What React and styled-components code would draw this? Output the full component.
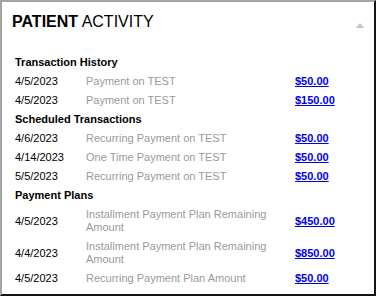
import React from "react";
import styled, { createGlobalStyle } from "styled-components";

const GlobalStyle = createGlobalStyle`
    html, body {
        margin: 0;
        padding: 0;
        background: #ffffff;
    }
    body {
        font-family: "Liberation Sans", Arial, Helvetica, sans-serif;
    }
`

const StyledPanel = styled.div`
    box-sizing: border-box;
    width: 376px;
    height: 296px;
    background: #ffffff;
    border-top: 2px solid #a4a4a4;
    border-left: 2px solid #a4a4a4;
    border-right: 2px solid #141414;
    border-bottom: 2px solid #141414;
    overflow: hidden;
`

const StyledHeader = styled.div`
    display: flex;
    align-items: center;
    justify-content: space-between;
    padding: 10px 10px 0 10px;
    height: 20px;
`

const StyledTitle = styled.h2`
    margin: 0;
    font-size: 16px;
    line-height: 20px;
    font-weight: normal;
    color: #000;

    b {
        font-weight: bold;
    }
`

const StyledCaret = styled.span`
    width: 0;
    height: 0;
    margin-top: 7px;
    border-left: 4px solid transparent;
    border-right: 4px solid transparent;
    border-bottom: 5px solid #c2c2c2;
    cursor: pointer;
`

const StyledBody = styled.div`
    padding: 21px 13px 0 13px;
`

const StyledSection = styled.div`
    display: grid;
    grid-template-columns: 71px 209px auto;
    font-size: 11px;
    line-height: 13px;
`

const StyledSectionTitle = styled.div`
    grid-column: 1 / -1;
    padding: 3px 0;
    font-weight: bold;
    color: #000;
`

const StyledCell = styled.div`
    padding: 3px 0;
    display: flex;
    align-items: center;
    color: ${({ $muted }) => ($muted ? "#9a9a9a" : "#000")};
`

const StyledAmount = styled.a`
    color: #0000ee;
    font-weight: bold;
    text-decoration: underline;
`

const sections = [
    {
        title: "Transaction History",
        rows: [
            { date: "4/5/2023", desc: "Payment on TEST", amount: "$50.00" },
            { date: "4/5/2023", desc: "Payment on TEST", amount: "$150.00" },
        ],
    },
    {
        title: "Scheduled Transactions",
        rows: [
            { date: "4/6/2023", desc: "Recurring Payment on TEST", amount: "$50.00" },
            { date: "4/14/2023", desc: "One Time Payment on TEST", amount: "$50.00" },
            { date: "5/5/2023", desc: "Recurring Payment on TEST", amount: "$50.00" },
        ],
    },
    {
        title: "Payment Plans",
        rows: [
            { date: "4/5/2023", desc: "Installment Payment Plan Remaining Amount", amount: "$450.00" },
            { date: "4/4/2023", desc: "Installment Payment Plan Remaining Amount", amount: "$850.00" },
            { date: "4/5/2023", desc: "Recurring Payment Plan Amount", amount: "$50.00" },
        ],
    },
]

const Section = ({ title, rows }) => (
    <StyledSection>
        <StyledSectionTitle>{title}</StyledSectionTitle>
        {rows.map((row, i) => (
            <React.Fragment key={i}>
                <StyledCell>{row.date}</StyledCell>
                <StyledCell $muted>{row.desc}</StyledCell>
                <StyledCell>
                    <StyledAmount href="#">{row.amount}</StyledAmount>
                </StyledCell>
            </React.Fragment>
        ))}
    </StyledSection>
)

const App = () => {
    return (
        <>
            <GlobalStyle />
            <StyledPanel>
                <StyledHeader>
                    <StyledTitle><b>PATIENT</b> ACTIVITY</StyledTitle>
                    <StyledCaret />
                </StyledHeader>
                <StyledBody>
                    {sections.map((s) => (
                        <Section key={s.title} title={s.title} rows={s.rows} />
                    ))}
                </StyledBody>
            </StyledPanel>
        </>
    )
}

export default App;
